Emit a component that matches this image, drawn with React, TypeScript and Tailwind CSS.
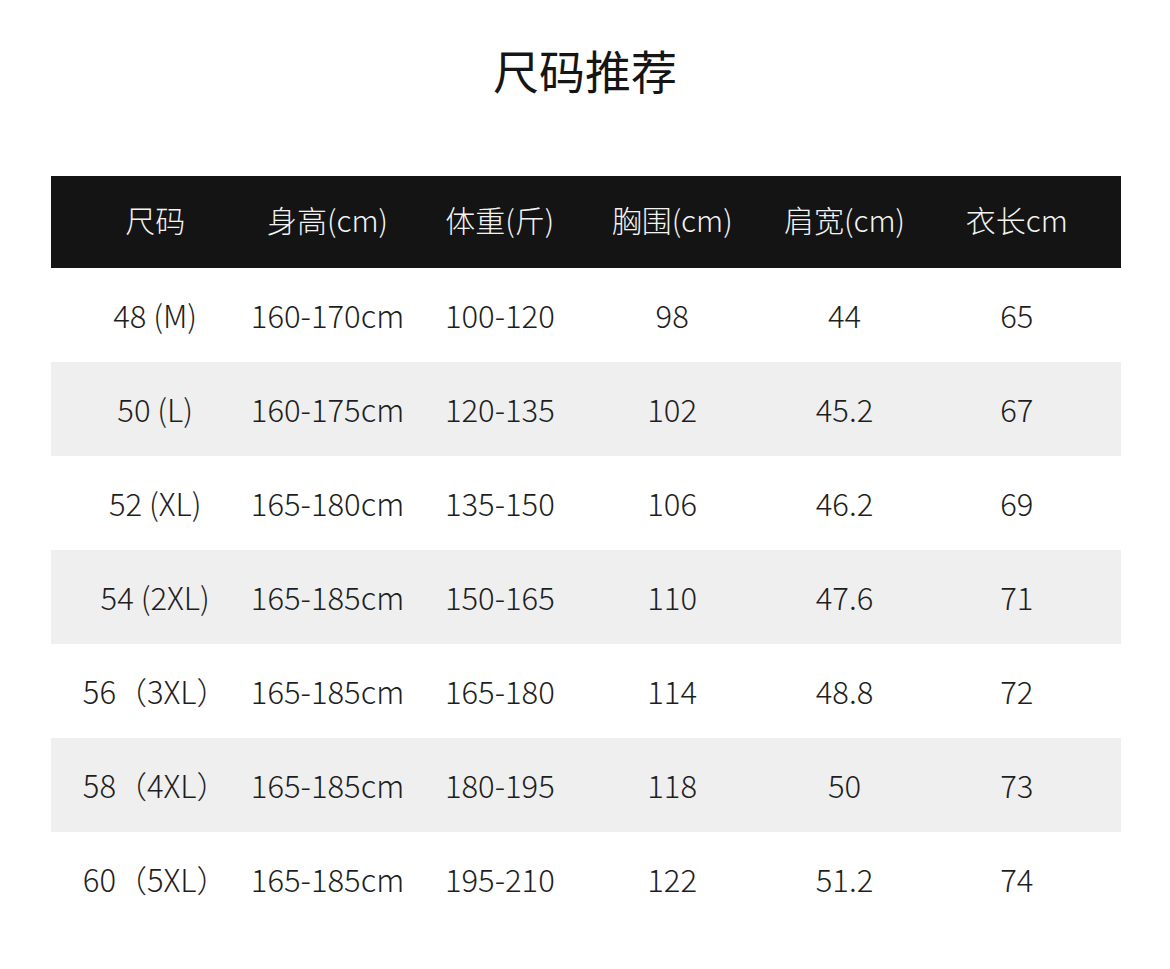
const headers = ["尺码", "身高(cm)", "体重(斤)", "胸围(cm)", "肩宽(cm)", "衣长cm"];

const rows = [
  ["48 (M)", "160-170cm", "100-120", "98", "44", "65"],
  ["50 (L)", "160-175cm", "120-135", "102", "45.2", "67"],
  ["52 (XL)", "165-180cm", "135-150", "106", "46.2", "69"],
  ["54 (2XL)", "165-185cm", "150-165", "110", "47.6", "71"],
  ["56（3XL）", "165-185cm", "165-180", "114", "48.8", "72"],
  ["58（4XL）", "165-185cm", "180-195", "118", "50", "73"],
  ["60（5XL）", "165-185cm", "195-210", "122", "51.2", "74"],
];

export default function App() {
  return (
    <div
      className="h-[969px] w-[1170px] bg-white"
      style={{ fontFamily: '"Noto Sans CJK SC", "Noto Sans", sans-serif' }}
    >
      <h1 className="pt-[39px] text-center text-[46px] leading-[60px] font-normal text-[#151515]">
        尺码推荐
      </h1>

      <div className="ml-[51px] mt-[77px] w-[1070px]">
        <div className="grid h-[92px] grid-cols-6 items-center bg-[#141414] px-[18px] pb-[5px] text-[30px] font-light text-[#f3f3f3]">
          {headers.map((h) => (
            <div key={h} className="text-center">{h}</div>
          ))}
        </div>
        {rows.map((row, i) => (
          <div
            key={row[0]}
            className={`grid h-[94px] grid-cols-6 items-center px-[18px] text-[31px] font-light text-[#1e1e1e] ${
              i % 2 === 1 ? "bg-[#efefef]" : "bg-white"
            }`}
          >
            {row.map((cell, j) => (
              <div key={j} className="text-center whitespace-nowrap">{cell}</div>
            ))}
          </div>
        ))}
      </div>
    </div>
  );
}
